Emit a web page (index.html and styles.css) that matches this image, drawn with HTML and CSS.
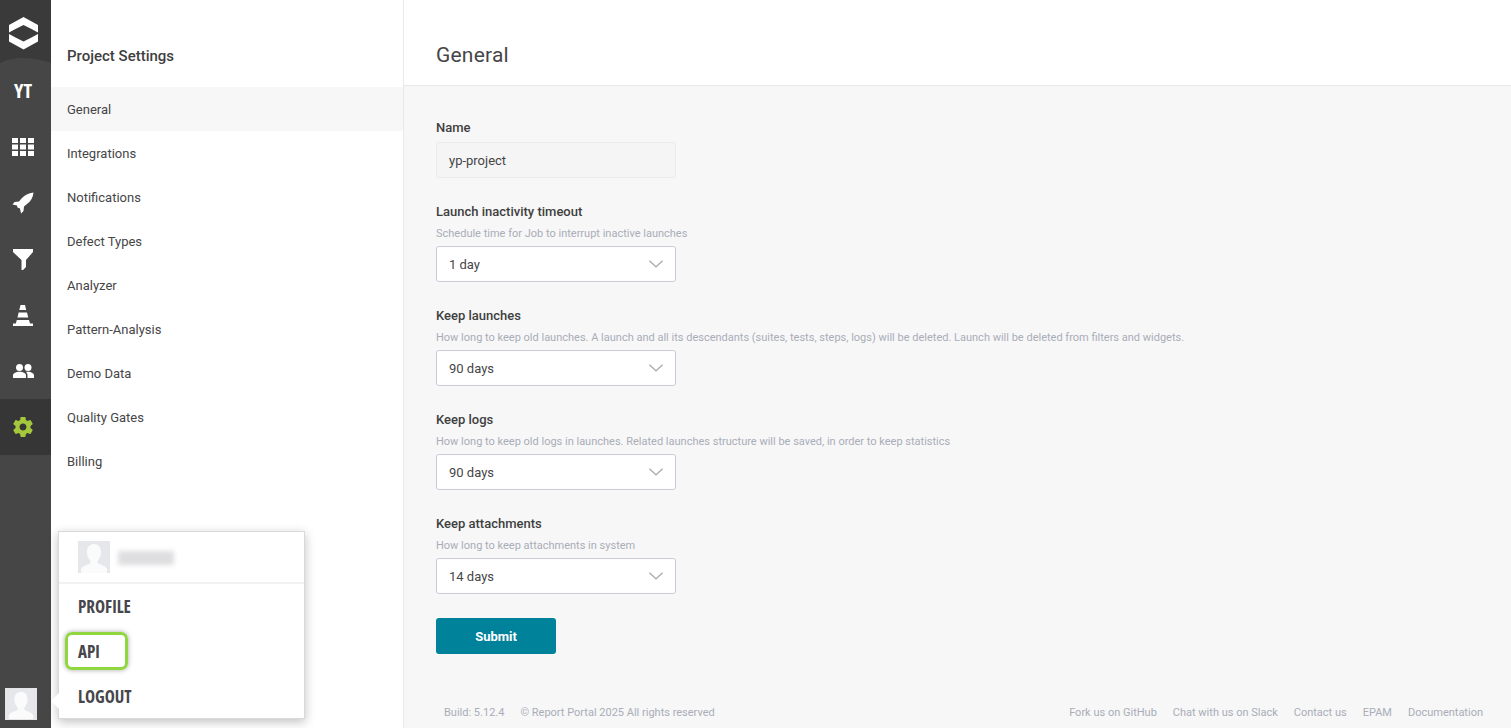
FILE: index.html
```html
<!DOCTYPE html>
<html lang="en">
<head>
<meta charset="utf-8">
<title>Project Settings</title>
<link rel="stylesheet" href="styles.css">
</head>
<body>
<div class="app">
  <aside class="rail">
    <div class="rail-logo">
      <svg class="logo" viewBox="0 0 51 66" width="51" height="66">
        <path class="logo-cap" d="M0 0H51V63Q36 58 23 58T0 63Z"/>
        <path class="logo-mark" d="M23.500 17L38 25V32.500L31.500 29L23.500 25L15.500 29L9 32.500V25Z"/>
        <path class="logo-mark" d="M23.500 49.500L38 41.500V34L31.500 37.500L23.500 41.500L15.500 37.500L9 34V41.500Z"/>
      </svg>
    </div>
    <nav class="rail-nav">
      <div class="rail-item rail-yt">YT</div>
      <div class="rail-item">
        <svg viewBox="0 0 22 18" width="22" height="18" class="ico"><path d="M0 0h6v5H0zM8 0h6v5H8zM16 0h6v5h-6zM0 6.500h6v5H0zM8 6.500h6v5H8zM16 6.500h6v5h-6zM0 13h6v5H0zM8 13h6v5H8zM16 13h6v5h-6z"/></svg>
      </div>
      <div class="rail-item">
        <svg viewBox="0 0 22 22" width="22" height="22" class="ico"><path d="M21.500.5C16.500 1 12.500 3 9.500 6.500L7 9.500 2.500 10 .5 12.500 5 13.500 5.500 15.500 8 16.500 9 21.500 11.500 19 12 14.500 15 12C19 9 21 5.500 21.500.5Z"/></svg>
      </div>
      <div class="rail-item">
        <svg viewBox="0 0 20 21" width="20" height="21" class="ico"><path d="M0 0H20V3L13 11V18L10 21H8.500V11L0 3Z"/></svg>
      </div>
      <div class="rail-item">
        <svg viewBox="0 0 20 21" width="20" height="21" class="ico"><path d="M7.500 0H12L13.200 5H6.300ZM5.600 7.500H14L15.200 12.500H4.500ZM3.800 15H16L17 18.500H20V21H0V18.500H2.800Z"/></svg>
      </div>
      <div class="rail-item">
        <svg viewBox="0 0 21 14" width="21" height="14" class="ico"><circle cx="6.500" cy="3.500" r="3.500"/><circle cx="15" cy="3.500" r="3.500"/><path d="M0 14V11.500C0 9 3.500 7.800 6.500 7.800S13 9 13 11.500V14ZM14.500 14V11.500C14.500 10 14 9 13 8 13.500 7.900 14.500 7.800 15 7.800 17.500 7.800 21 9 21 11.500V14Z"/></svg>
      </div>
      <div class="rail-item rail-active">
        <svg viewBox="0 0 24 24" width="24" height="24" class="ico-green"><path d="M19.430 12.980c.04-.32.070-.64.070-.98s-.03-.66-.07-.98l2.110-1.650c.19-.15.240-.42.120-.64l-2-3.460c-.12-.22-.39-.30-.61-.22l-2.490 1c-.52-.40-1.080-.73-1.690-.98l-.38-2.650C14.460 2.180 14.250 2 14 2h-4c-.25 0-.46.18-.49.420l-.38 2.650c-.61.25-1.170.59-1.690.98l-2.490-1c-.23-.09-.49 0-.61.220l-2 3.460c-.13.220-.07.490.12.640l2.110 1.650c-.04.320-.07.650-.07.980s.03.660.07.980l-2.110 1.650c-.19.150-.24.420-.12.640l2 3.460c.12.220.39.300.61.220l2.490-1c.52.400 1.080.730 1.690.980l.38 2.650c.03.240.240.420.490.420h4c.25 0 .46-.18.490-.42l.38-2.650c.61-.25 1.170-.59 1.690-.98l2.490 1c.23.090.49 0 .61-.22l2-3.460c.12-.22.070-.49-.12-.64zM12 15.500c-1.930 0-3.500-1.570-3.500-3.500s1.570-3.500 3.500-3.500 3.500 1.570 3.500 3.500-1.570 3.500-3.500 3.500z"/></svg>
      </div>
    </nav>
    <div class="rail-avatar">
      <svg viewBox="0 0 32 32" width="32" height="32" class="avatar-svg"><rect width="32" height="32" class="avatar-bg"/><path class="avatar-fg" d="M16 3C11 3 9 7 9 11C9 15 10.500 18 12.500 20V22C9 24 4 25 3 28V32H29V28C28 25 23 24 19.500 22V20C21.500 18 23 15 23 11C23 7 21 3 16 3Z"/></svg>
    </div>
  </aside>

  <aside class="settings">
    <h2 class="settings-title">Project Settings</h2>
    <ul class="settings-list">
      <li class="settings-item is-active">General</li>
      <li class="settings-item">Integrations</li>
      <li class="settings-item">Notifications</li>
      <li class="settings-item">Defect Types</li>
      <li class="settings-item">Analyzer</li>
      <li class="settings-item">Pattern-Analysis</li>
      <li class="settings-item">Demo Data</li>
      <li class="settings-item">Quality Gates</li>
      <li class="settings-item">Billing</li>
    </ul>
  </aside>

  <main class="main">
    <header class="main-header"><h1 class="main-title">General</h1></header>
    <form class="form">
      <div class="field">
        <label class="field-label">Name</label>
        <div class="input">yp-project</div>
      </div>
      <div class="field">
        <label class="field-label">Launch inactivity timeout</label>
        <p class="field-desc">Schedule time for Job to interrupt inactive launches</p>
        <div class="select">1 day<svg class="chev" viewBox="0 0 14 8" width="14" height="8"><path d="M.5.8L7 7L13.500.8"/></svg></div>
      </div>
      <div class="field">
        <label class="field-label">Keep launches</label>
        <p class="field-desc">How long to keep old launches. A launch and all its descendants (suites, tests, steps, logs) will be deleted. Launch will be deleted from filters and widgets.</p>
        <div class="select">90 days<svg class="chev" viewBox="0 0 14 8" width="14" height="8"><path d="M.5.8L7 7L13.500.8"/></svg></div>
      </div>
      <div class="field">
        <label class="field-label">Keep logs</label>
        <p class="field-desc">How long to keep old logs in launches. Related launches structure will be saved, in order to keep statistics</p>
        <div class="select">90 days<svg class="chev" viewBox="0 0 14 8" width="14" height="8"><path d="M.5.8L7 7L13.500.8"/></svg></div>
      </div>
      <div class="field">
        <label class="field-label">Keep attachments</label>
        <p class="field-desc">How long to keep attachments in system</p>
        <div class="select">14 days<svg class="chev" viewBox="0 0 14 8" width="14" height="8"><path d="M.5.8L7 7L13.500.8"/></svg></div>
      </div>
      <button type="button" class="submit">Submit</button>
    </form>
    <footer class="footer">
      <div class="footer-left"><span>Build: 5.12.4</span><span>© Report Portal 2025 All rights reserved</span></div>
      <div class="footer-right"><span>Fork us on GitHub</span><span>Chat with us on Slack</span><span>Contact us</span><span>EPAM</span><span>Documentation</span></div>
    </footer>
  </main>
</div>

<div class="popup">
  <span class="popup-arrow"></span>
  <div class="popup-user">
    <svg viewBox="0 0 32 32" width="32" height="32" class="avatar-svg"><rect width="32" height="32" class="avatar-bg"/><path class="avatar-fg" d="M16 3C11 3 9 7 9 11C9 15 10.500 18 12.500 20V22C9 24 4 25 3 28V32H29V28C28 25 23 24 19.500 22V20C21.500 18 23 15 23 11C23 7 21 3 16 3Z"/></svg>
    <span class="popup-name"></span>
  </div>
  <div class="popup-menu">
    <div class="popup-item">PROFILE</div>
    <div class="popup-item"><span class="api-mark"></span>API</div>
    <div class="popup-item">LOGOUT</div>
  </div>
</div>
</body>
</html>
```

FILE: styles.css
```css
* { box-sizing: border-box; }
html, body { margin: 0; height: 100%; overflow: hidden; }
body { font-family: Roboto, "Liberation Sans", sans-serif; color: #464547; background: #fff; }

.app { display: flex; height: 728px; }

.rail { width: 51px; flex: none; background: #464646; display: flex; flex-direction: column; }
.rail-logo { height: 63px; flex: none; }
.logo { display: block; overflow: visible; }
.logo-cap { fill: #3a3a3a; }
.logo-mark { fill: #fff; }
.rail-nav { display: flex; flex-direction: column; }
.rail-item { height: 56px; padding-right: 5px; display: flex; align-items: center; justify-content: center; }
.rail-yt { color: #fff; font: 700 20px/1 "Open Sans", Roboto, sans-serif; font-stretch: 75%; }
.ico { fill: #fff; }
.ico-green { fill: #a3c83c; }
.rail-active { background: #363636; }
.rail-avatar { margin-top: auto; padding: 0 0 8px 5px; }
.avatar-svg { display: block; }
.rail-avatar .avatar-svg { border: 1px solid #e4e4e4; }
.avatar-bg { fill: #e6e7ea; }
.avatar-fg { fill: #fbfbfc; }

.settings { width: 353px; flex: none; background: #fff; border-right: 1px solid #e9e9e9; padding-top: 44px; }
.settings-title { margin: 0 0 19px 16px; font-size: 15px; line-height: 24px; font-weight: 500; color: #3f3f3f; }
.settings-list { list-style: none; margin: 0; padding: 0; }
.settings-item { height: 44px; padding-left: 16px; display: flex; align-items: center; font-size: 13px; color: #464547; }
.is-active { background: #f7f7f7; }

.main { flex: 1; min-width: 0; background: #f7f7f7; display: flex; flex-direction: column; }
.main-header { height: 86px; flex: none; background: #fff; border-bottom: 1px solid #e9e9e9; padding: 24px 0 0 32px; display: flex; align-items: center; }
.main-title { margin: 0; font-size: 21px; font-weight: 400; color: #464547; letter-spacing: .2px; }

.form { flex: 1; padding: 32px 32px 0; display: flex; flex-direction: column; gap: 24px; align-items: flex-start; }
.field { display: flex; flex-direction: column; }
.field-label { font-size: 13px; line-height: 20px; font-weight: 500; color: #3f3f3f; margin-bottom: 4px; }
.field-desc { margin: -2px 0 2px; font-size: 11px; line-height: 20px; color: #a9adb8; }
.input, .select { width: 240px; height: 36px; border-radius: 3px; display: flex; align-items: center; padding-left: 12px; font-size: 13px; color: #464547; }
.input { background: #f5f5f5; border: 1px solid #ebebef; }
.select { background: #fff; border: 1px solid #c8cbd6; justify-content: space-between; padding-right: 12px; }
.chev { fill: none; stroke: #a2a6b3; stroke-width: 1.200; }
.submit { width: 120px; height: 36px; border: 0; border-radius: 3px; background: #00829b; color: #fff; font: 700 13px Roboto, sans-serif; }

.footer { height: 32px; flex: none; padding: 9px 28px 0 40px; display: flex; justify-content: space-between; font-size: 11px; line-height: 16px; color: #a9adb8; }
.footer-left { display: flex; gap: 16px; }
.footer-right { display: flex; gap: 16px; }

.popup { position: absolute; left: 58px; top: 531px; width: 247px; height: 188px; background: #fff; border: 1px solid #d9d9d9; box-shadow: 0 3px 10px rgba(0,0,0,.25); }
.popup-arrow { position: absolute; left: -8px; top: 161px; width: 0; height: 0; border: 8px solid transparent; border-left: 0; border-right-color: #fff; }
.popup-user { height: 52px; padding: 9px 0 0 19px; display: flex; gap: 8px; border-bottom: 2px solid #f2f2f2; }
.popup-name { width: 56px; height: 14px; margin-top: 10px; background: #dedee0; filter: blur(2.5px); }
.popup-menu { display: flex; flex-direction: column; }
.popup-item { position: relative; height: 45px; padding-left: 19px; display: flex; align-items: center; font: 700 17px/1 "Open Sans", Roboto, sans-serif; font-stretch: 75%; color: #46464c; }
.api-mark { position: absolute; left: 6px; top: 3px; width: 63px; height: 38px; border: 3px solid #8fd63f; border-radius: 7px; box-shadow: 0 0 5px rgba(0,0,0,.35); }
```
